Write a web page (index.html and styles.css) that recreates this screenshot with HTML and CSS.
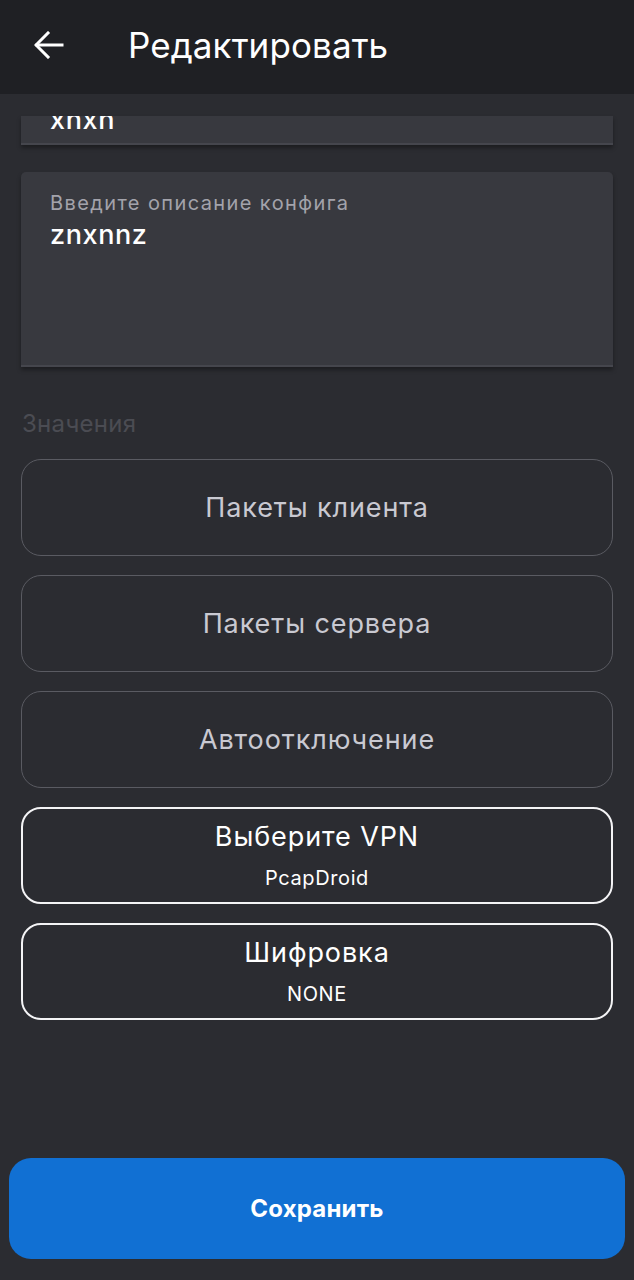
FILE: index.html
```html
<!DOCTYPE html>
<html lang="ru">
<head>
<meta charset="utf-8">
<title>Редактировать</title>
<link rel="stylesheet" href="styles.css">
</head>
<body>
<div class="app">
  <header class="topbar">
    <button class="back" aria-label="Назад">
      <svg width="30" height="28" viewBox="0 0 30 28" fill="none" stroke="#ffffff" stroke-width="3" stroke-linecap="square">
        <path d="M28 14H3"/>
        <path d="M14 2L2 14L14 26"/>
      </svg>
    </button>
    <h1 class="title">Редактировать</h1>
  </header>

  <main class="content">
    <div class="field field-short">
      <div class="field-value field-value-cut">xnxn</div>
    </div>

    <div class="field field-tall">
      <div class="field-label">Введите описание конфига</div>
      <div class="field-value">znxnnz</div>
    </div>

    <div class="section-label">Значения</div>

    <div class="options">
      <button class="option option-muted">Пакеты клиента</button>
      <button class="option option-muted">Пакеты сервера</button>
      <button class="option option-muted">Автоотключение</button>
      <button class="option option-active">
        <span class="option-title">Выберите VPN</span>
        <span class="option-sub">PcapDroid</span>
      </button>
      <button class="option option-active">
        <span class="option-title">Шифровка</span>
        <span class="option-sub">NONE</span>
      </button>
    </div>
  </main>

  <footer class="footer">
    <button class="save">Сохранить</button>
  </footer>
</div>
</body>
</html>
```

FILE: styles.css
```css
* { box-sizing: border-box; }

html, body {
  margin: 0;
  padding: 0;
  background: #2b2c31;
  font-family: Inter, Roboto, "Noto Sans", "Liberation Sans", sans-serif;
  color: #ffffff;
}

.app {
  width: 634px;
  height: 1280px;
  display: flex;
  flex-direction: column;
  background: #2b2c31;
}

.topbar {
  height: 94px;
  background: #1f2024;
  display: flex;
  align-items: center;
  padding-left: 34px;
  flex-shrink: 0;
}

.back {
  background: none;
  border: 0;
  padding: 0;
  width: 30px;
  height: 28px;
  display: flex;
  margin-top: -4px;
}

.title {
  margin: -4px 0 0 64px;
  font-weight: 400;
  font-size: 35px;
  letter-spacing: 0.1px;
  color: #ffffff;
}

.content {
  flex: 1;
  padding: 22px 21px 0 21px;
  display: flex;
  flex-direction: column;
}

.field {
  background: #38393f;
  border-bottom: 2px solid #45464d;
  box-shadow: 0 3px 4px rgba(0, 0, 0, 0.35);
  padding: 0 29px;
  overflow: hidden;
}

.field-short {
  height: 29px;
}

.field-tall {
  margin-top: 27px;
  height: 195px;
  border-radius: 5px 5px 0 0;
  padding-top: 18px;
}

.field-label {
  font-size: 20px;
  line-height: 26px;
  letter-spacing: 1.4px;
  color: #a3a3ab;
}

.field-value {
  font-size: 27px;
  font-weight: 500;
  line-height: 30px;
  letter-spacing: 0.6px;
  color: #ffffff;
  margin-top: 4px;
}

.field .field-value-cut {
  margin-top: -11px;
}

.section-label {
  margin-top: 43px;
  font-size: 24px;
  line-height: 28px;
  color: #4b4c53;
  padding-left: 1px;
  letter-spacing: 0.3px;
}

.options {
  margin-top: 21px;
  display: flex;
  flex-direction: column;
  gap: 19px;
}

.option {
  height: 97px;
  border-radius: 20px;
  background: transparent;
  font-family: inherit;
  display: flex;
  flex-direction: column;
  align-items: center;
  justify-content: center;
  padding: 0;
  width: 100%;
}

.option-muted {
  border: 1.5px solid #5a5b62;
  color: #c9c9d1;
  font-size: 27px;
  letter-spacing: 0.9px;
}

.option-active {
  border: 2px solid #f4f4f6;
  color: #ffffff;
}

.option-title {
  font-size: 27px;
  line-height: 32px;
  letter-spacing: 0.9px;
}

.option-sub {
  font-size: 20px;
  line-height: 26px;
  letter-spacing: 0.6px;
  margin-top: 12px;
}

.footer {
  padding: 0 9px 21px 9px;
  flex-shrink: 0;
}

.save {
  width: 100%;
  height: 101px;
  background: #1170d3;
  border: 0;
  border-radius: 22px;
  color: #ffffff;
  font-family: inherit;
  font-size: 24px;
  font-weight: 700;
  letter-spacing: 0.2px;
}
```
